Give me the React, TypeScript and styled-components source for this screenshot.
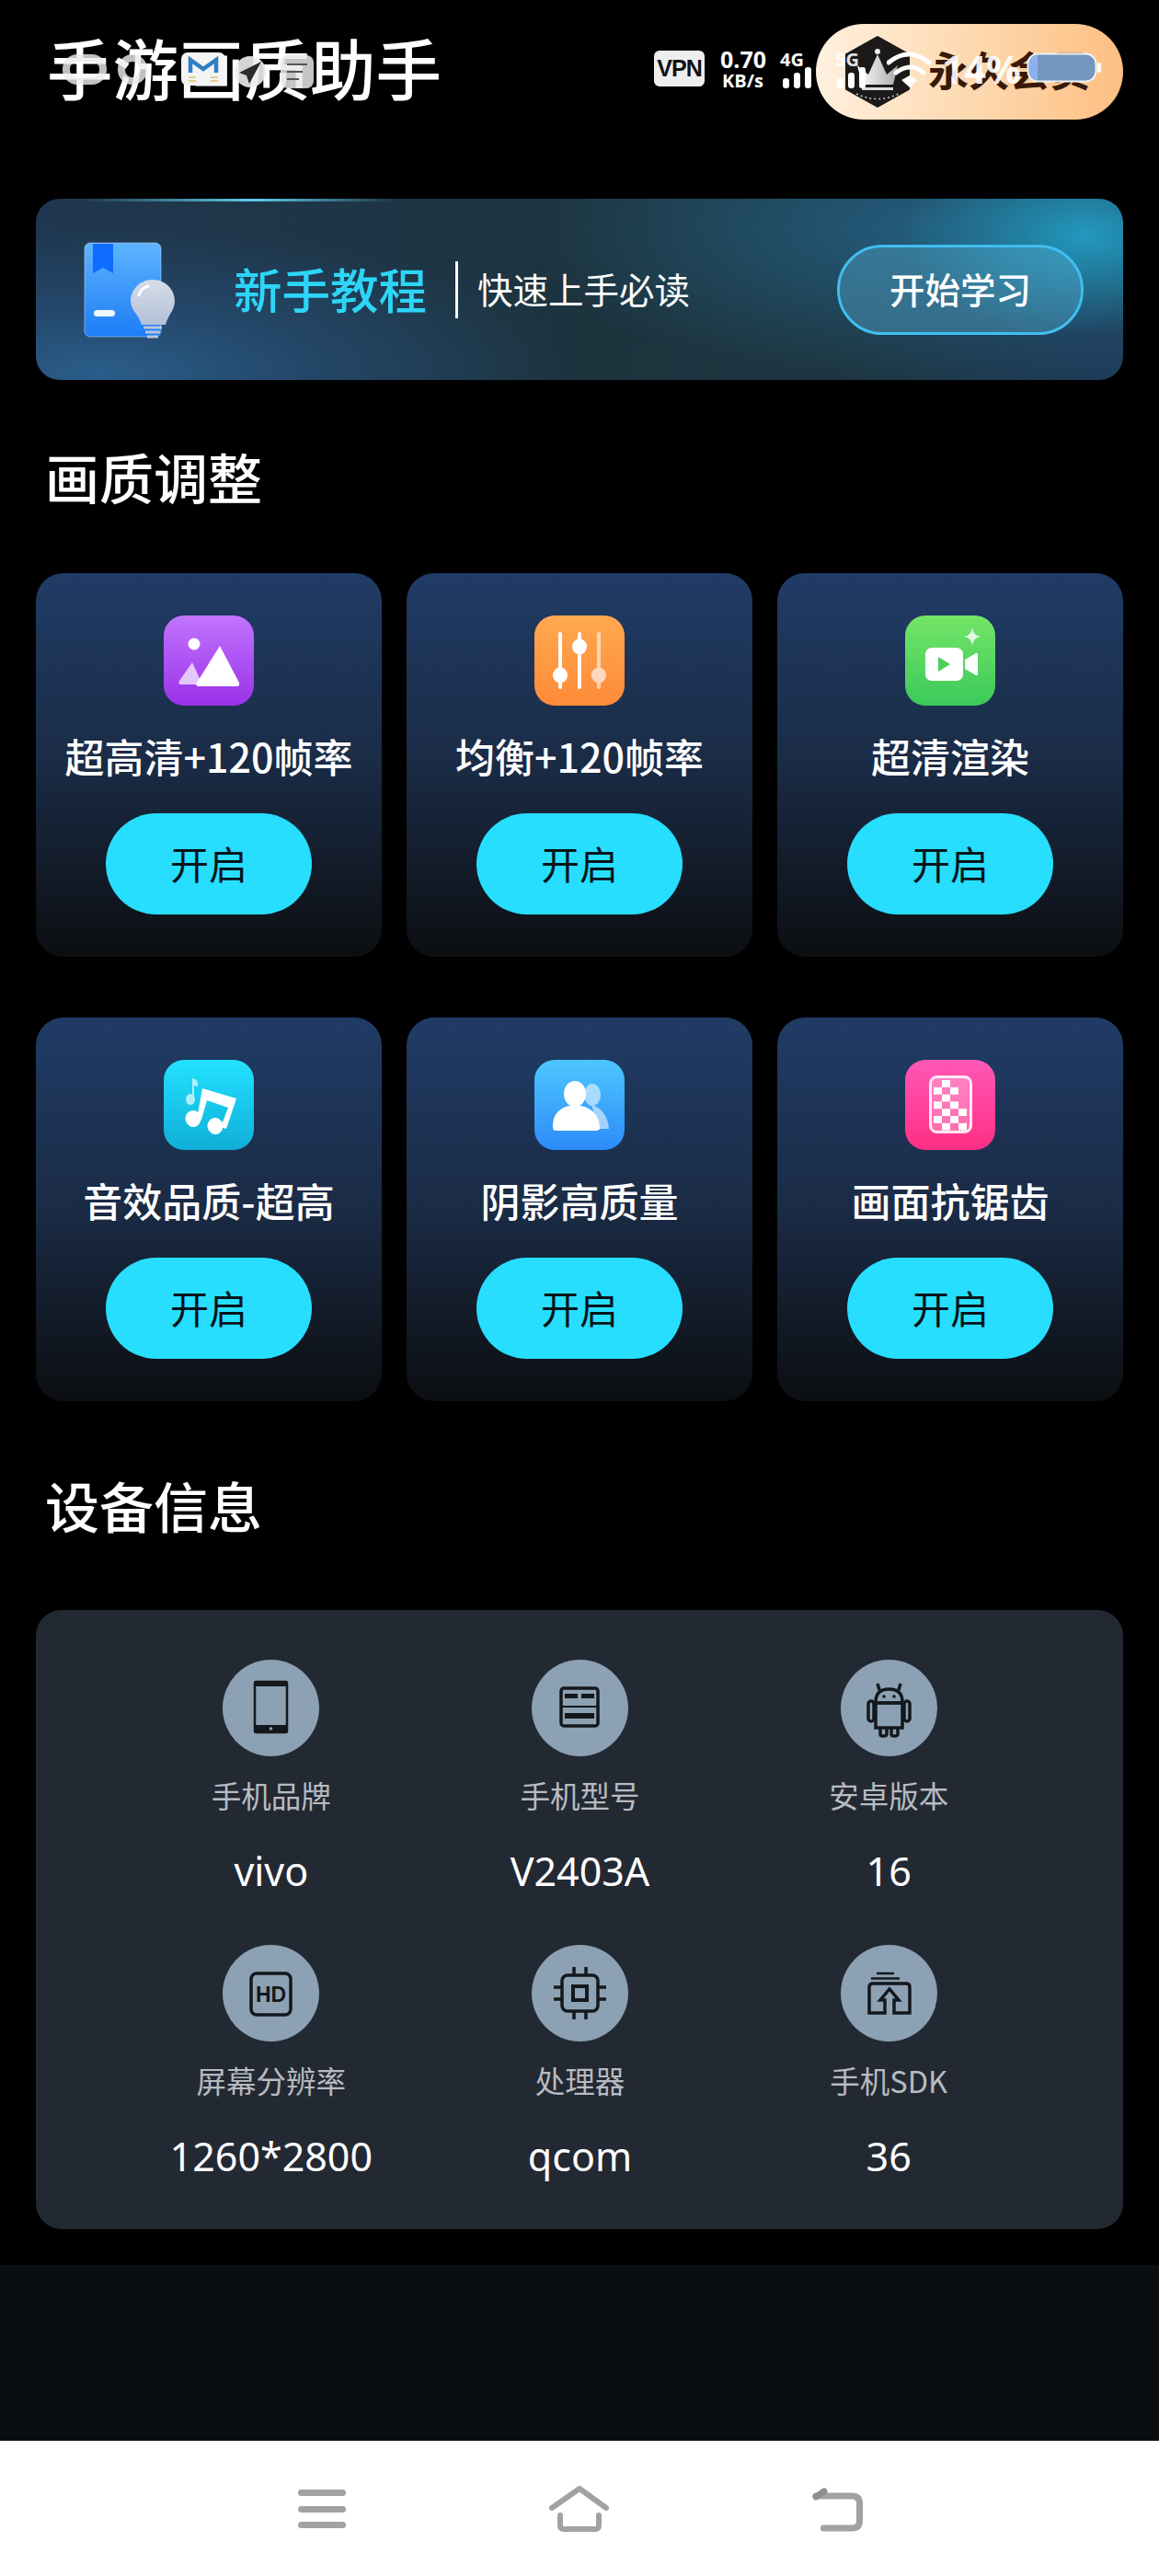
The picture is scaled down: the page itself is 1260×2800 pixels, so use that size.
import React from "react";
import styled, { createGlobalStyle } from "styled-components";

const Global = createGlobalStyle`
  html, body { margin: 0; padding: 0; background: #000; }
  * { box-sizing: border-box; }
  body { font-family: "Noto Sans CJK SC", "Noto Sans", sans-serif; }
`;

const Page = styled.div`
  position: relative;
  width: 1260px;
  height: 2800px;
  background: #000;
  display: flex;
  flex-direction: column;
  overflow: hidden;
`;

const Main = styled.main`
  flex: none;
  height: 2462px;
  padding: 26px 39px 0;
  display: flex;
  flex-direction: column;
`;

const Header = styled.header`
  display: flex;
  align-items: center;
  justify-content: space-between;
  height: 104px;
  padding-left: 12px;
`;

const AppTitle = styled.h1`
  margin: 0 0 12px;
  font-size: 71.5px;
  line-height: 80px;
  font-weight: 500;
  color: #fff;
`;

const MemberPill = styled.div`
  width: 334px;
  height: 104px;
  border-radius: 52px;
  display: flex;
  align-items: center;
  gap: 19px;
  padding-left: 31px;
  background: linear-gradient(90deg, #fff0df 0%, #fdd9b0 50%, #fdbf82 100%);
`;

const MemberText = styled.span`
  font-size: 44px;
  font-weight: 700;
  color: #38190a;
  white-space: nowrap;
  margin-bottom: 6px;
`;

const Banner = styled.section`
  position: relative;
  margin-top: 86px;
  height: 197px;
  border-radius: 26px;
  display: flex;
  align-items: center;
  padding-left: 51px;
  overflow: hidden;
  background:
    radial-gradient(ellipse 200px 110px at 1142px 40px, #2299bf 0%, rgba(34, 153, 191, 0.55) 45%, rgba(34, 153, 191, 0) 100%),
    radial-gradient(ellipse 420px 170px at 960px 30px, rgba(36, 96, 130, 0.9) 0%, rgba(36, 96, 130, 0) 100%),
    radial-gradient(ellipse 500px 160px at 70px 190px, #2a5d8a 0%, rgba(38, 78, 118, 0.7) 45%, rgba(34, 62, 90, 0) 100%),
    radial-gradient(ellipse 300px 130px at 1180px 170px, #1f3f60 0%, rgba(31, 63, 96, 0) 100%),
    linear-gradient(90deg, #1f3750 0%, #1d343f 50%, #1d3640 100%);

  &::before {
    content: "";
    position: absolute;
    left: 50px;
    top: 0;
    width: 340px;
    height: 3px;
    background: linear-gradient(90deg, rgba(70, 190, 225, 0), #5fcbe8 55%, rgba(70, 190, 225, 0));
  }
`;

const BannerIcon = styled.svg`
  flex: none;
  width: 100px;
  height: 110px;
  margin-top: 2px;
`;

const BannerTitle = styled.span`
  margin: 0 0 4px 64px;
  font-size: 52.5px;
  font-weight: 500;
  color: #2dd5f6;
  white-space: nowrap;
`;

const BannerRule = styled.span`
  flex: none;
  width: 3px;
  height: 62px;
  margin-left: 31px;
  background: #fff;
`;

const BannerSub = styled.span`
  margin: 0 0 3px 21px;
  font-size: 38.5px;
  color: #fff;
  white-space: nowrap;
`;

const BannerButton = styled.button`
  margin-left: auto;
  margin-right: 43px;
  width: 268px;
  height: 98px;
  padding: 0 0 3px;
  border-radius: 49px;
  border: 3px solid #41bdf0;
  background: rgba(84, 170, 205, 0.42);
  color: #fff;
  font: 500 38.5px "Noto Sans CJK SC", sans-serif;
`;

const SectionTitle = styled.h2<{ $top: number }>`
  margin: ${(p) => p.$top}px 0 0 10px;
  height: 80px;
  font-size: 59px;
  line-height: 72px;
  font-weight: 500;
  color: #fff;
`;

const QualityGrid = styled.div`
  margin-top: 61px;
  display: grid;
  grid-template-columns: repeat(3, 376px);
  column-gap: 27px;
  row-gap: 66px;
`;

const QualityCard = styled.article`
  height: 417px;
  border-radius: 30px;
  padding-top: 46px;
  display: flex;
  flex-direction: column;
  align-items: center;
  background: linear-gradient(180deg, #203c66 0%, #1a2b45 50%, #0c0e11 100%);
`;

const Tile = styled.svg<{ $from: string; $to: string }>`
  flex: none;
  width: 98px;
  height: 98px;
  border-radius: 22px;
  background: linear-gradient(180deg, ${(p) => p.$from}, ${(p) => p.$to});
`;

const CardLabel = styled.div`
  margin-top: 26px;
  height: 58px;
  font-size: 43px;
  line-height: 56px;
  font-weight: 500;
  color: #fff;
  white-space: nowrap;
`;

const EnableButton = styled.button`
  margin-top: 33px;
  width: 224px;
  height: 110px;
  padding: 0 0 3px;
  border: 0;
  border-radius: 55px;
  background: #27deff;
  color: #07141a;
  font: 400 42px "Noto Sans CJK SC", sans-serif;
`;

const DeviceCard = styled.section`
  margin-top: 70px;
  height: 673px;
  border-radius: 28px;
  background: #232933;
  padding: 54px 87px 54px 88px;
  display: grid;
  grid-template-columns: repeat(3, 1fr);
  align-content: start;
  row-gap: 54px;
`;

const DeviceCell = styled.div`
  display: flex;
  flex-direction: column;
  align-items: center;
`;

const DeviceIcon = styled.svg`
  flex: none;
  width: 105px;
  height: 105px;
  border-radius: 50%;
  background: #8ca1b3;
`;

const DeviceLabel = styled.div`
  margin-top: 22px;
  height: 40px;
  font-size: 32.5px;
  line-height: 40px;
  font-weight: 400;
  color: #b7bbc0;
  white-space: nowrap;
`;

const DeviceValue = styled.div`
  margin-top: 38px;
  height: 51px;
  font-size: 43px;
  line-height: 50px;
  font-family: "Noto Sans", sans-serif;
  color: #fff;
  white-space: nowrap;
`;

const Filler = styled.div`
  flex: none;
  height: 191px;
  background: #0a0e11;
`;

const NavBar = styled.nav`
  flex: none;
  height: 147px;
  background: #fff;
  display: flex;
  align-items: flex-start;
  padding: 47px 0 0 321px;
`;

const NavIcon = styled.svg<{ $gap: number }>`
  flex: none;
  width: 72px;
  height: 60px;
  margin-left: ${(p) => p.$gap}px;
`;

const StatusBar = styled.div`
  position: absolute;
  inset: 0 0 auto 0;
  height: 130px;
  pointer-events: none;
`;

const StatusRing = styled.span<{ $x: number; $w: number }>`
  position: absolute;
  left: ${(p) => p.$x}px;
  top: 59px;
  width: ${(p) => p.$w}px;
  height: 33px;
  border-radius: 16px;
  border: 8px solid rgba(235, 235, 235, 0.82);
`;

const PlaneBadge = styled.svg`
  position: absolute;
  left: 254px;
  top: 60px;
  width: 36px;
  height: 36px;
`;

const NoteTile = styled.svg`
  position: absolute;
  left: 305px;
  top: 60px;
  width: 36px;
  height: 36px;
  border-radius: 8px;
  background: rgba(232, 232, 232, 0.85);
`;

const MailTile = styled.svg`
  position: absolute;
  left: 197px;
  top: 57px;
  width: 48px;
  height: 36px;
  border-radius: 7px;
  background: #f4f4f4;
`;

const VpnTag = styled.span`
  position: absolute;
  left: 711px;
  top: 55px;
  width: 55px;
  height: 39px;
  border-radius: 6px;
  background: #eee;
  color: #111;
  font: 700 25px/39px "Liberation Sans", sans-serif;
  text-align: center;
  letter-spacing: -1px;
`;

const StatusText = styled.span<{ $x: number; $y: number; $size: number; $alpha?: number }>`
  position: absolute;
  left: ${(p) => p.$x}px;
  top: ${(p) => p.$y}px;
  font: 700 ${(p) => p.$size}px/1 "Open Sans", sans-serif;
  color: rgba(255, 255, 255, ${(p) => p.$alpha ?? 1});
  white-space: nowrap;
`;

const SignalBars = styled.svg<{ $x: number }>`
  position: absolute;
  left: ${(p) => p.$x}px;
  top: 72px;
  width: 34px;
  height: 24px;
`;

const WifiGlyph = styled.svg`
  position: absolute;
  left: 964px;
  top: 54px;
  width: 50px;
  height: 44px;
`;

const BatteryGlyph = styled.svg`
  position: absolute;
  left: 1116px;
  top: 57px;
  width: 82px;
  height: 34px;
`;

const items = [
  { label: "超高清+120帧率", from: "#c274ff", to: "#9a32e8", art: "image" },
  { label: "均衡+120帧率", from: "#ffa950", to: "#ff8a38", art: "sliders" },
  { label: "超清渲染", from: "#74e568", to: "#3cc95a", art: "video" },
  { label: "音效品质-超高", from: "#22e2ff", to: "#10aed8", art: "music" },
  { label: "阴影高质量", from: "#4dc6ff", to: "#2d8bfa", art: "users" },
  { label: "画面抗锯齿", from: "#ff58b6", to: "#ff2e84", art: "checker" },
];

const checkerRows = [[1], [0, 2], [1], [0, 2], [1, 3], [0, 2], [1, 3]];

function TileArt({ kind }: { kind: string }) {
  switch (kind) {
    case "image":
      return (
        <>
          <ellipse cx="33" cy="31" rx="6.5" ry="6.5" fill="#fff" />
          <path d="M31 51 L42 75 H19 Q15 75 17 71 Z" fill="#fff" opacity=".7" />
          <path d="M61 33 L82 73 Q83 77 79 77 H38 Q34 77 36 73 Z" fill="#fff" />
        </>
      );
    case "sliders":
      return (
        <g stroke="#fff" strokeWidth="4" strokeLinecap="round">
          <path d="M28 20 V78 M49 20 V78" />
          <path d="M70 20 V78" opacity=".6" />
          <ellipse cx="28" cy="65" rx="8" ry="8.5" fill="#fff" stroke="none" />
          <ellipse cx="49" cy="34" rx="8" ry="8.5" fill="#fff" stroke="none" />
          <ellipse cx="70" cy="65" rx="8" ry="8.5" fill="#ffd8c0" stroke="none" />
        </g>
      );
    case "video":
      return (
        <>
          <rect x="22" y="35" width="41" height="36" rx="7" fill="#fff" />
          <path d="M65 48 L77 41 Q79 40 79 43 V63 Q79 66 77 65 L65 58 Z" fill="#fff" />
          <path d="M36 45 L49 53 L36 61 Z" fill="#4ccf5d" />
          <path d="M73 13 Q74 22 82 23 Q74 24 73 33 Q72 24 64 23 Q72 22 73 13 Z" fill="#fff" opacity=".8" />
        </>
      );
    case "music":
      return (
        <>
          <g fill="#fff">
            <ellipse cx="32" cy="64" rx="8.5" ry="9" transform="rotate(-15 32 64)" />
            <ellipse cx="56" cy="72" rx="8.5" ry="9" transform="rotate(-15 56 72)" />
            <path d="M36 64 L42 31 L79 42 L68 75 L62 73 L70 52 L47 44 L41 65 Z" />
          </g>
          <g fill="#fff" opacity=".65">
            <ellipse cx="29" cy="43" rx="5" ry="6" />
            <path d="M31 43 L31 20 Q38 21 37 29 L33 28 L33 43 Z" />
          </g>
        </>
      );
    case "users":
      return (
        <>
          <g fill="#fff" opacity=".55">
            <ellipse cx="63" cy="38" rx="9" ry="12" />
            <path d="M62 49 Q79 54 81 75 H70 Z" />
          </g>
          <ellipse cx="44" cy="37" rx="12" ry="14" fill="#fff" />
          <path d="M20 74 Q19 51 44 49 Q70 51 71 74 Q71 77 67 77 H24 Q20 77 20 74 Z" fill="#fff" />
        </>
      );
    default:
      return (
        <>
          <rect x="27.5" y="18.5" width="44" height="60" rx="7" fill="rgba(255,255,255,.28)" stroke="#fff" strokeOpacity=".85" strokeWidth="3" />
          {checkerRows.map((row, r) =>
            row.map((c) => <rect key={`${r}-${c}`} x={31 + c * 9} y={22 + r * 7.8} width="9" height="7.8" fill="#fff" />)
          )}
        </>
      );
  }
}

const stroke = { fill: "none", stroke: "#14181d", strokeWidth: 3.5 } as const;

function DeviceArt({ kind }: { kind: string }) {
  switch (kind) {
    case "phone":
      return (
        <>
          <rect x="35" y="24" width="35" height="55" rx="2" fill="none" stroke="#14181d" strokeWidth="2.5" />
          <rect x="34" y="23" width="37" height="6" rx="2" fill="#14181d" />
          <rect x="34" y="71" width="37" height="9" rx="2" fill="#14181d" />
          <circle cx="52.5" cy="75" r="1.8" fill="#8ca1b3" />
        </>
      );
    case "model":
      return (
        <>
          <rect x="32" y="31" width="40" height="41" rx="3" {...stroke} />
          <path d="M32 51 H72" {...stroke} strokeWidth="2" />
          <rect x="36" y="37" width="14" height="5" fill="#14181d" />
          <rect x="54" y="37" width="14" height="5" fill="#14181d" />
          <rect x="36" y="58" width="32" height="6" fill="#14181d" />
        </>
      );
    case "android":
      return (
        <>
          <path d="M38 46 Q38 32 52.5 32 Q67 32 67 46 V47 H38 Z" {...stroke} />
          <rect x="38" y="47" width="29" height="27" {...stroke} />
          <rect x="30" y="45" width="6" height="22" rx="3" {...stroke} />
          <rect x="69" y="45" width="6" height="22" rx="3" {...stroke} />
          <path d="M43 74 V81 Q43 83 46 83 Q50 83 50 81 V74 M55 74 V81 Q55 83 58 83 Q62 83 62 81 V74" {...stroke} />
          <path d="M42 33 L40 26 M63 33 L65 26" {...stroke} />
          <circle cx="47" cy="40" r="1.8" fill="#14181d" />
          <circle cx="58" cy="40" r="1.8" fill="#14181d" />
        </>
      );
    case "hd":
      return (
        <>
          <rect x="31" y="31" width="43" height="45" rx="6" {...stroke} />
          <text x="52.5" y="62" textAnchor="middle" fontFamily="Liberation Sans" fontSize="23" fontWeight="700" fill="#14181d">HD</text>
        </>
      );
    case "chip":
      return (
        <>
          <rect x="33" y="33" width="39" height="39" rx="6" {...stroke} />
          <rect x="45" y="45" width="15" height="15" {...stroke} strokeWidth="4" />
          <path d="M46 24 V33 M59 24 V33 M46 72 V81 M59 72 V81 M24 46 H33 M24 59 H33 M72 46 H81 M72 59 H81" {...stroke} />
        </>
      );
    default:
      return (
        <>
          <path d="M39 31 H58 M33 36.5 H64" {...stroke} strokeWidth="2.5" />
          <path d="M31 74 V46 Q31 42 35 42 H71 Q75 42 75 46 V74 H58 V60 H63 L53 48 L43 60 H48 V74 Z" {...stroke} />
        </>
      );
  }
}

const device = [
  { label: "手机品牌", value: "vivo", art: "phone" },
  { label: "手机型号", value: "V2403A", art: "model" },
  { label: "安卓版本", value: "16", art: "android" },
  { label: "屏幕分辨率", value: "1260*2800", art: "hd" },
  { label: "处理器", value: "qcom", art: "chip" },
  { label: "手机SDK", value: "36", art: "sdk" },
];

function Signal({ x, bars }: { x: number; bars: number[] }) {
  return (
    <SignalBars $x={x} viewBox="0 0 34 24">
      {bars.map((h, i) => (
        <rect key={i} x={i * 12} y={24 - h} width="7" height={h} rx="3" fill="#fff" />
      ))}
    </SignalBars>
  );
}

export default function App() {
  return (
    <Page>
      <Global />
      <Main>
        <Header>
          <AppTitle>手游画质助手</AppTitle>
          <MemberPill>
            <svg width="72" height="78" viewBox="0 0 72 78">
              <defs>
                <linearGradient id="crown" x1="0" y1="0" x2="1" y2="0">
                  <stop offset="0" stopColor="#ffffff" />
                  <stop offset="1" stopColor="#a8a8a8" />
                </linearGradient>
              </defs>
              <path d="M36 1 L70 20 V58 L36 77 L2 58 V20 Z" fill="#1b1a19" stroke="#1b1a19" strokeLinejoin="round" strokeWidth="2" />
              <path d="M14 32 L26 42 L36 20 L46 42 L58 32 L53 53 H19 Z" fill="url(#crown)" />
              <circle cx="36" cy="17" r="3" fill="#eee" />
              <rect x="19" y="56" width="34" height="3" fill="#ddd" />
              <path d="M13 63 Q36 74 59 63" fill="none" stroke="#ccc" strokeWidth="1.5" strokeDasharray="2 3" />
            </svg>
            <MemberText>永久会员</MemberText>
          </MemberPill>
        </Header>

        <Banner>
          <BannerIcon viewBox="0 0 100 110">
            <defs>
              <linearGradient id="book" x1="0" y1="0" x2="0" y2="1">
                <stop offset="0" stopColor="#5db4ff" />
                <stop offset="1" stopColor="#1d7df5" />
              </linearGradient>
              <linearGradient id="bulb" x1="0" y1="0" x2="0" y2="1">
                <stop offset="0" stopColor="#d6dde9" />
                <stop offset="1" stopColor="#b3c0d8" />
              </linearGradient>
            </defs>
            <rect x="2" y="3" width="83" height="102" rx="6" fill="url(#book)" stroke="#cfe6ff" strokeOpacity=".5" strokeWidth="1" />
            <path d="M11 4 H33 V36 L22 30 L11 36 Z" fill="#0f6cff" />
            <rect x="12" y="76" width="23" height="7" rx="3.5" fill="#eef6ff" />
            <path d="M76 43 C90 43 100 54 100 66 C100 76 93 81 90 92 H64 C61 81 52 76 52 66 C52 54 62 43 76 43 Z" fill="url(#bulb)" />
            <path d="M66 95 H86 M68 100 H84 M70 105 H82" stroke="#b8c6dc" strokeWidth="3" />
            <path d="M61 60 Q63 52 71 50" fill="none" stroke="#fff" strokeWidth="3" strokeLinecap="round" />
          </BannerIcon>
          <BannerTitle>新手教程</BannerTitle>
          <BannerRule />
          <BannerSub>快速上手必读</BannerSub>
          <BannerButton>开始学习</BannerButton>
        </Banner>

        <SectionTitle $top={69}>画质调整</SectionTitle>
        <QualityGrid>
          {items.map((it) => (
            <QualityCard key={it.label}>
              <Tile $from={it.from} $to={it.to} viewBox="0 0 98 98">
                <TileArt kind={it.art} />
              </Tile>
              <CardLabel>{it.label}</CardLabel>
              <EnableButton>开启</EnableButton>
            </QualityCard>
          ))}
        </QualityGrid>

        <SectionTitle $top={77}>设备信息</SectionTitle>
        <DeviceCard>
          {device.map((d) => (
            <DeviceCell key={d.label}>
              <DeviceIcon viewBox="0 0 105 105">
                <DeviceArt kind={d.art} />
              </DeviceIcon>
              <DeviceLabel>{d.label}</DeviceLabel>
              <DeviceValue>{d.value}</DeviceValue>
            </DeviceCell>
          ))}
        </DeviceCard>
      </Main>

      <Filler />

      <NavBar>
        <NavIcon $gap={0} viewBox="0 0 72 60">
          <g fill="#a2a2a2">
            <rect x="3" y="6" width="52" height="7" rx="3.5" />
            <rect x="3" y="24" width="52" height="7" rx="3.5" />
            <rect x="3" y="41" width="52" height="7" rx="3.5" />
          </g>
        </NavIcon>
        <NavIcon $gap={201} viewBox="0 0 72 60">
          <g fill="none" stroke="#a2a2a2" strokeWidth="6" strokeLinecap="round" strokeLinejoin="round">
            <path d="M6 26 L36 5 L65 26" />
            <path d="M15 34 V45 Q15 49 19 49 H53 Q57 49 57 45 V34" />
          </g>
        </NavIcon>
        <NavIcon $gap={210} viewBox="0 0 72 60">
          <g fill="none" stroke="#a2a2a2" strokeWidth="7" strokeLinecap="round" strokeLinejoin="round">
            <path d="M11 13 H50 Q58.5 13 58.5 21 V40 Q58.5 48 50 48 H19.5" />
            <path d="M11 14 L20 8" stroke="#8f8f8f" />
          </g>
        </NavIcon>
      </NavBar>

      <StatusBar>
        <StatusRing $x={68} $w={48} />
        <StatusRing $x={128} $w={32} />
        <MailTile viewBox="0 0 48 36">
          <path d="M10 22 V8 L24 18 L38 8 V22" fill="none" stroke="#2f7fc4" strokeWidth="4.5" />
          <path d="M8 27 H16 M32 27 H40 M8 31 H16 M32 31 H40" stroke="#e6bd62" strokeWidth="1.5" />
        </MailTile>
        <PlaneBadge viewBox="0 0 36 36">
          <circle cx="18" cy="18" r="17" fill="#ececec" opacity=".9" />
          <path d="M30 7 L6 19 L14 22 L17 31 Z" fill="#2a2a2a" />
        </PlaneBadge>
        <NoteTile viewBox="0 0 36 36">
          <path d="M7 10 H29 M7 18 H24 M7 26 H20" stroke="#555" strokeWidth="2" />
        </NoteTile>
        <VpnTag>VPN</VpnTag>
        <StatusText $x={783} $y={52} $size={25}>0.70</StatusText>
        <StatusText $x={785} $y={78} $size={20}>KB/s</StatusText>
        <StatusText $x={848} $y={55} $size={20}>4G</StatusText>
        <Signal x={851} bars={[11, 17, 23]} />
        <StatusText $x={908} $y={55} $size={20} $alpha={0.9}>5G</StatusText>
        <Signal x={910} bars={[11, 17, 23]} />
        <WifiGlyph viewBox="0 0 50 44">
          <g fill="none" stroke="#fff" strokeWidth="5" strokeLinecap="round">
            <path d="M2 14 Q24 -4 46 14" />
            <path d="M10 25 Q26 13 40 25" />
          </g>
          <path d="M16 33 L25 28 L33 33 L25 41 Z" fill="#fff" />
        </WifiGlyph>
        <StatusText $x={1024} $y={54} $size={42} $alpha={0.92}>14%</StatusText>
        <BatteryGlyph viewBox="0 0 82 34">
          <rect x="1.5" y="1.5" width="74" height="30" rx="11" fill="#7397bf" stroke="#f2f2f2" strokeWidth="2" />
          <path d="M3 12 Q3 3 12 3 V30 Q3 30 3 21 Z" fill="#8db1ec" />
          <rect x="77" y="11" width="4" height="11" rx="2" fill="#fff" />
        </BatteryGlyph>
      </StatusBar>
    </Page>
  );
}
